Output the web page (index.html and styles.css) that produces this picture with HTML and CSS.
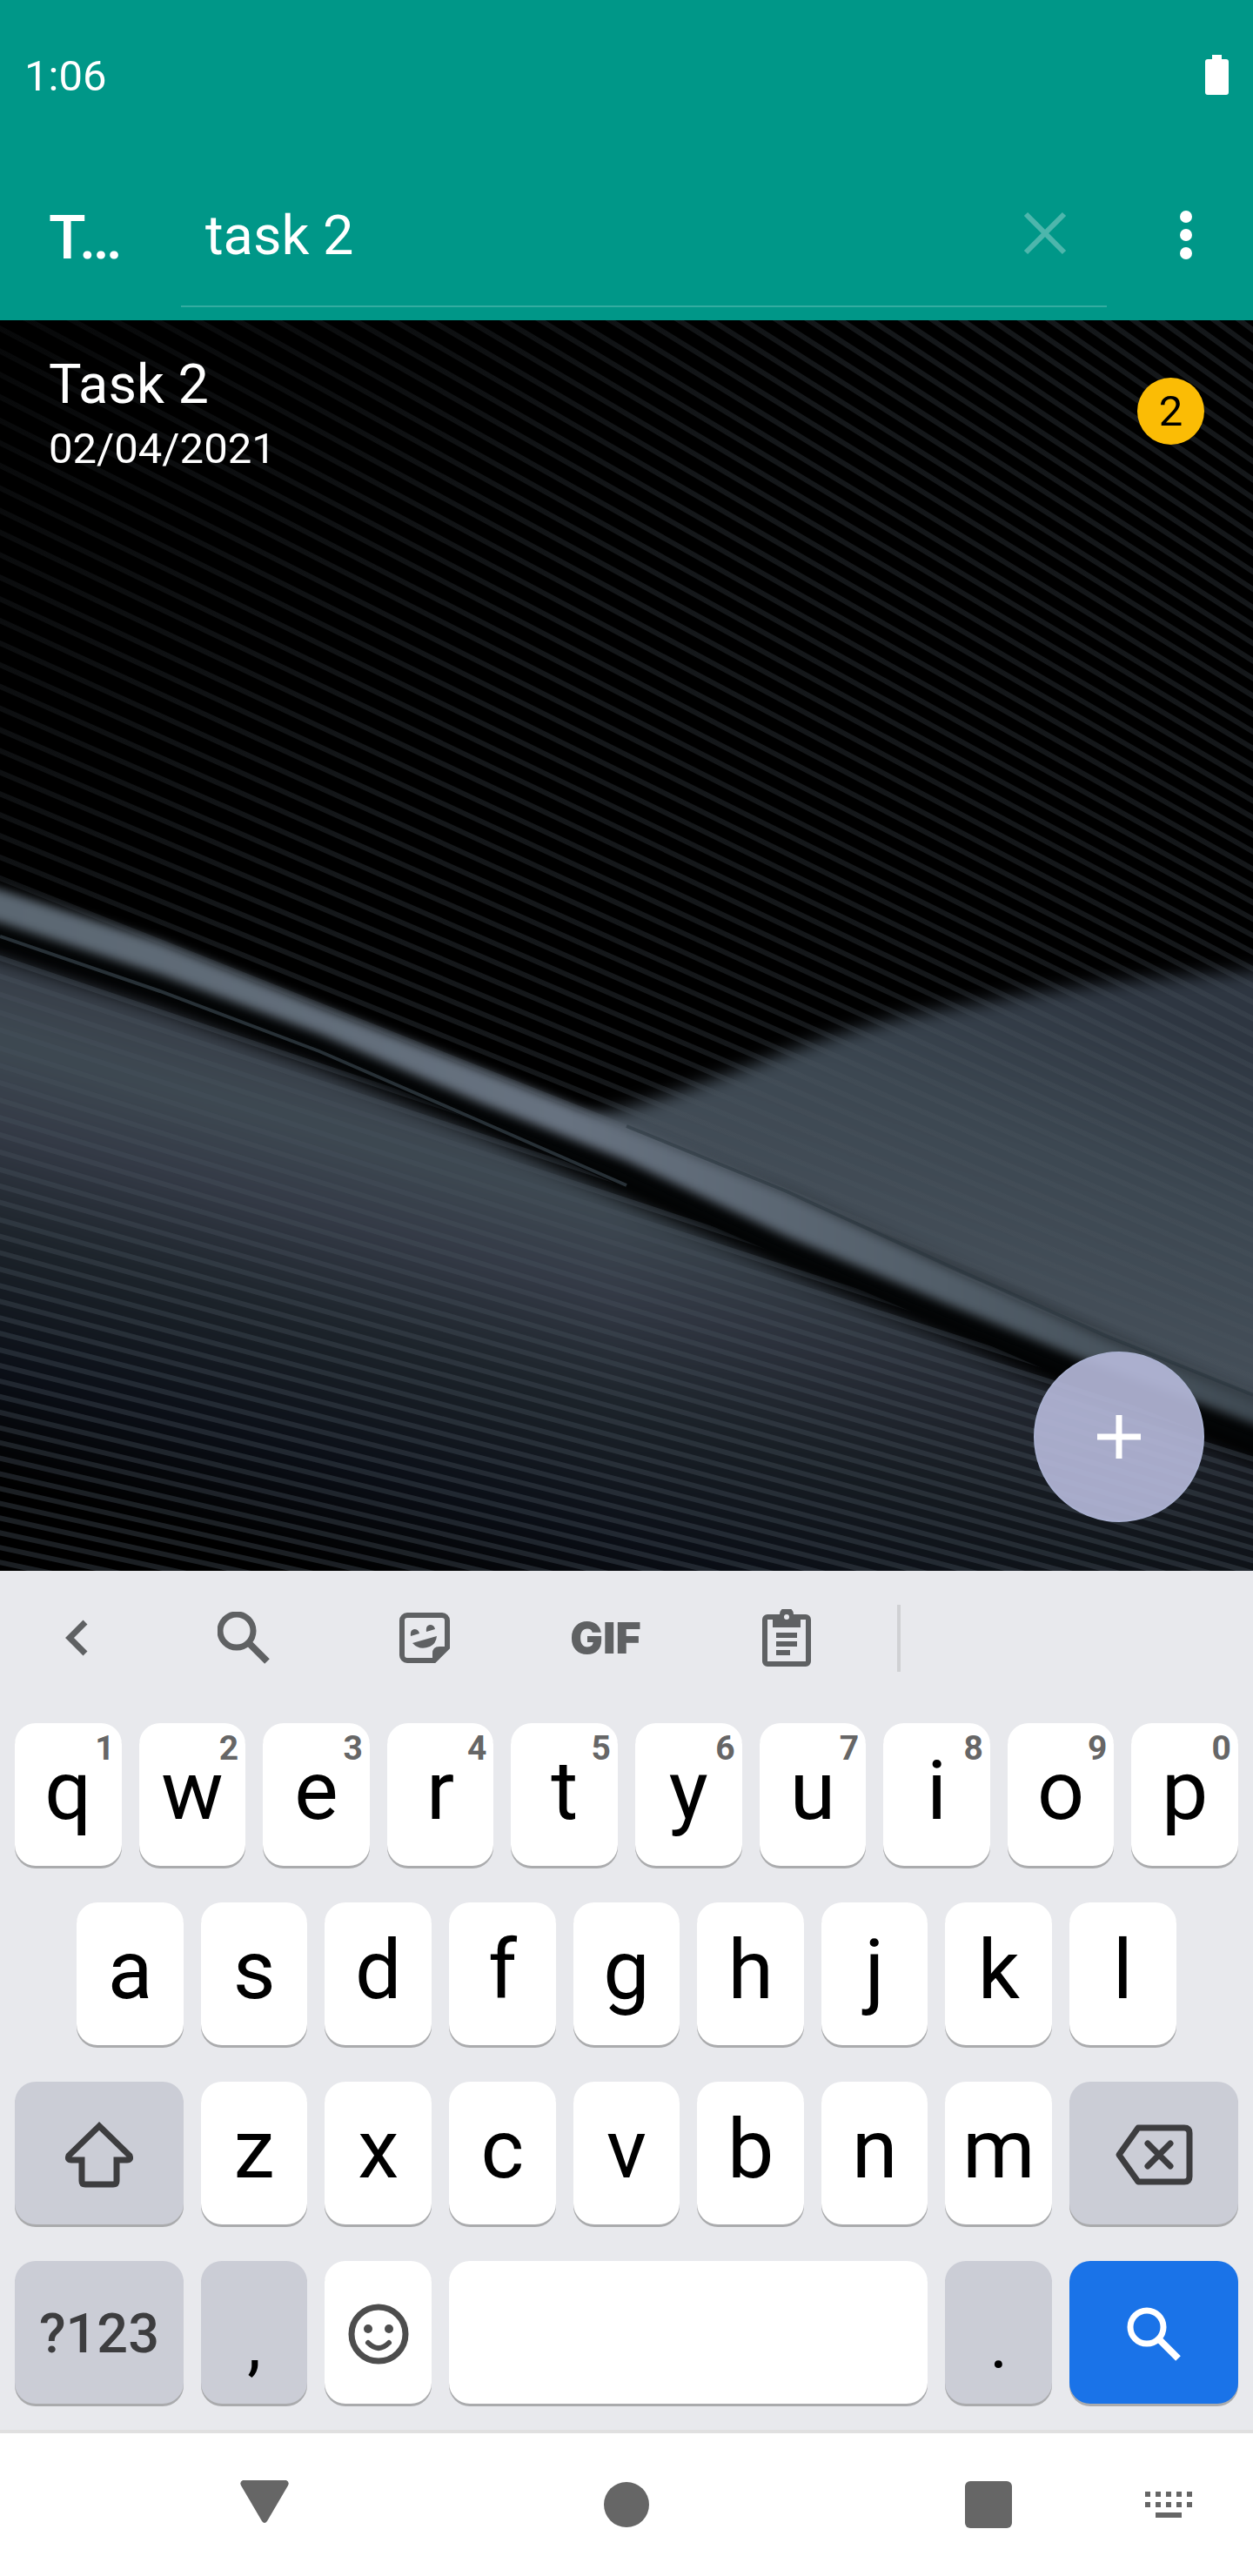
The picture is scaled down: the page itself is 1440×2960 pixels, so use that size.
FILE: index.html
```html
<!DOCTYPE html>
<html lang="en">
<head>
<meta charset="utf-8">
<meta name="viewport" content="width=device-width, initial-scale=1">
<title>Tasks</title>
<link rel="stylesheet" href="styles.css">
</head>
<body>
<div class="screen">
  <header class="top">
    <div class="status">
      <time class="clock">1:06</time>
      <svg class="battery" width="27" height="46" viewBox="0 0 27 46" aria-label="Battery full"><path d="M8 0h11v5h5a3 3 0 0 1 3 3v35a3 3 0 0 1-3 3H3a3 3 0 0 1-3-3V8a3 3 0 0 1 3-3h5z"/></svg>
    </div>
    <div class="appbar">
      <h1 class="title">T…</h1>
      <form class="search">
        <input class="query" type="text" aria-label="Search tasks" value="task 2">
        <button class="clear" type="reset" aria-label="Clear">
          <svg width="50" height="50" viewBox="0 0 50 50"><path d="M3 3l44 44M47 3L3 47" fill="none" stroke="#4db6ac" stroke-width="6"/></svg>
        </button>
      </form>
      <button class="more" type="button" aria-label="More options">
        <svg width="14" height="56" viewBox="0 0 14 56" fill="#fff"><circle cx="7" cy="7" r="7"/><circle cx="7" cy="28" r="7"/><circle cx="7" cy="49" r="7"/></svg>
      </button>
    </div>
  </header>

  <main class="board">
    <svg class="wallpaper" viewBox="0 368 1440 1437" preserveAspectRatio="xMidYMid slice" aria-hidden="true" color-interpolation-filters="sRGB">
      <defs>
        <linearGradient id="lower" gradientUnits="userSpaceOnUse" x1="300" y1="1150" x2="140" y2="1740">
          <stop offset="0" stop-color="#25303a"/>
          <stop offset=".08" stop-color="#383f49"/>
          <stop offset=".2" stop-color="#3e4952"/>
          <stop offset=".36" stop-color="#343a46"/>
          <stop offset=".56" stop-color="#1c232a"/>
          <stop offset=".8" stop-color="#0b0f17"/>
          <stop offset="1" stop-color="#000"/>
        </linearGradient>
        <linearGradient id="fade" gradientUnits="userSpaceOnUse" x1="700" y1="0" x2="1440" y2="0">
          <stop offset="0" stop-color="#04060a" stop-opacity="0"/>
          <stop offset="1" stop-color="#04060a" stop-opacity=".6"/>
        </linearGradient>
        <linearGradient id="right" gradientUnits="userSpaceOnUse" x1="1200" y1="1120" x2="1080" y2="1460">
          <stop offset="0" stop-color="#2e3641"/>
          <stop offset=".5" stop-color="#3c4751"/>
          <stop offset="1" stop-color="#444e58"/>
        </linearGradient>
        <linearGradient id="rim" gradientUnits="userSpaceOnUse" x1="0" y1="0" x2="1440" y2="0">
          <stop offset="0" stop-color="#5b6772"/>
          <stop offset=".45" stop-color="#677280"/>
          <stop offset=".75" stop-color="#525e69"/>
          <stop offset="1" stop-color="#3f4a53"/>
        </linearGradient>
        <linearGradient id="rib" gradientUnits="userSpaceOnUse" x1="0" y1="400" x2="500" y2="900">
          <stop offset="0" stop-color="#4a545d" stop-opacity=".1"/>
          <stop offset="1" stop-color="#4a545d" stop-opacity=".28"/>
        </linearGradient>
        <clipPath id="above"><path d="M0 368H1440V1610L1271 1540L1087 1458L904 1375L720 1300L551 1232L367 1160L184 1086L0 1026Z"/></clipPath>
        <clipPath id="below"><path d="M0 1090L184 1150L367 1215L551 1290L720 1366L904 1446L1087 1524L1202 1574L1440 1670V1805H0Z"/></clipPath>
        <filter id="soft" x="-10%" y="-10%" width="120%" height="120%"><feGaussianBlur stdDeviation="6"/></filter>
        <filter id="softer" x="-10%" y="-10%" width="120%" height="120%"><feGaussianBlur stdDeviation="10"/></filter>
      </defs>
      <rect y="368" width="1440" height="1437" fill="#000"/>
      <path filter="url(#softer)" fill="url(#right)" d="M660 1286C720 1278 790 1252 858 1227C950 1190 1040 1165 1133 1152C1230 1132 1340 1122 1480 1114V1630L1271 1540L904 1375Z"/>
      <g id="upper-lines" clip-path="url(#above)" stroke="url(#rib)" stroke-width="6"></g>
      <g filter="url(#softer)">
        <path fill="url(#lower)" d="M-40 1088L0 1100L184 1160L367 1228L551 1304L720 1380L904 1460L1087 1536L1202 1588L1480 1695V1840H-40Z"/>
        <path fill="url(#fade)" d="M-40 1088L0 1100L184 1160L367 1228L551 1304L720 1380L904 1460L1087 1536L1202 1588L1480 1695V1840H-40Z"/>
      </g>
      <g id="lower-lines" clip-path="url(#below)" stroke="#46525b" stroke-opacity=".38" stroke-width="6"></g>
      <path filter="url(#soft)" fill="none" stroke="#030506" stroke-width="22" d="M-40 1064L0 1074L184 1134L367 1203L551 1281L720 1350L904 1436L1087 1512L1239 1574L1480 1668"/>
      <path fill="none" stroke="#38434c" stroke-opacity=".7" stroke-width="4" d="M0 1076L184 1139L367 1208L551 1288L720 1362"/>
      <path filter="url(#soft)" fill="url(#rim)" d="M-40 1012L0 1022L184 1082L367 1156L551 1228L720 1295L904 1370L1087 1455L1271 1537L1480 1622V1652L1440 1636L1239 1560L1087 1498L904 1421L720 1334L551 1267L367 1188L184 1120L0 1060L-40 1050Z"/>
      <path fill="none" stroke="#26313a" stroke-opacity=".5" stroke-width="4" d="M720 1294L904 1369L1087 1453L1271 1535L1440 1603"/>
    </svg>

    <section class="content">
      <ul class="tasks">
        <li class="task">
          <div class="summary">
            <h2 class="name">Task 2</h2>
            <p class="date">02/04/2021</p>
          </div>
          <span class="badge">2</span>
        </li>
      </ul>
      <button class="fab" type="button" aria-label="Add task">
        <svg width="50" height="50" viewBox="0 0 50 50"><path d="M25 0v50M0 25h50" stroke="#fff" stroke-width="7"/></svg>
      </button>
    </section>
  </main>

  <section class="keyboard" aria-label="Keyboard">
    <div class="tools">
      <button class="tool tool-back" type="button" aria-label="Back"><svg width="26" height="42" viewBox="0 0 26 42"><path d="M23 3L5 21l18 18" fill="none" stroke="#5f6163" stroke-width="7"/></svg></button>
      <button class="tool" type="button" aria-label="Search"><svg width="60" height="60" viewBox="0 0 60 60" fill="none" stroke="#5f6163"><circle cx="22" cy="22" r="19" stroke-width="7"/><path d="M36 36l21 21" stroke-width="8"/></svg></button>
      <button class="tool" type="button" aria-label="Stickers">
        <svg width="58" height="58" viewBox="0 0 58 58" fill="#5f6163"><path d="M9 3h40a6 6 0 0 1 6 6v31L40 55H9a6 6 0 0 1-6-6V9a6 6 0 0 1 6-6z" fill="none" stroke="#5f6163" stroke-width="6"/><path d="M38 57V47q0-8 8-8h11v2L41 57zM13 27q-1-7 4-8 5 0 6 5zM31 22q-1-7 4-8 5 0 6 5zM15 35l28-8q-1 9-8 12-12 5-20-4z"/></svg>
      </button>
      <button class="tool gif" type="button">GIF</button>
      <button class="tool" type="button" aria-label="Clipboard">
        <svg width="56" height="66" viewBox="0 0 56 66"><path fill="#5f6163" fill-rule="evenodd" d="M6 6h14a8 8 0 0 1 16 0h14a6 6 0 0 1 6 6v48a6 6 0 0 1-6 6H6a6 6 0 0 1-6-6V12a6 6 0 0 1 6-6zm0 6v48h44V12h-6v9H12v-9zM28 6a3 3 0 1 0 0 6 3 3 0 1 0 0-6zM16 27h24v6H16zM16 37h24v6H16zM16 47h16v6H16z"/></svg>
      </button>
      <span class="divider"></span>
    </div>
    <div class="keys">
      <button class="key">q<span class="hint">1</span></button>
      <button class="key">w<span class="hint">2</span></button>
      <button class="key">e<span class="hint">3</span></button>
      <button class="key">r<span class="hint">4</span></button>
      <button class="key">t<span class="hint">5</span></button>
      <button class="key">y<span class="hint">6</span></button>
      <button class="key">u<span class="hint">7</span></button>
      <button class="key">i<span class="hint">8</span></button>
      <button class="key">o<span class="hint">9</span></button>
      <button class="key">p<span class="hint">0</span></button>

      <button class="key key-indent">a</button>
      <button class="key">s</button>
      <button class="key">d</button>
      <button class="key">f</button>
      <button class="key">g</button>
      <button class="key">h</button>
      <button class="key">j</button>
      <button class="key">k</button>
      <button class="key">l</button>

      <button class="key key-wide key-gray key-icon key-first" aria-label="Shift"><svg width="80" height="76" viewBox="0 0 80 76"><path d="M40 5L5 39q-2 5 3 5h12v24q0 4 4 4h32q4 0 4-4V44h12q5 0 3-5z" fill="none" stroke="#3d3d3f" stroke-width="7"/></svg></button>
      <button class="key">z</button>
      <button class="key">x</button>
      <button class="key">c</button>
      <button class="key">v</button>
      <button class="key">b</button>
      <button class="key">n</button>
      <button class="key">m</button>
      <button class="key key-wide key-gray key-icon" aria-label="Delete"><svg width="90" height="70" viewBox="0 0 90 70" fill="none" stroke="#3d3d3f" stroke-width="7" stroke-linejoin="round"><path d="M27 4h53q6 0 6 6v50q0 6-6 6H27L5 35z"/><path d="M38 22l26 26M64 22L38 48" stroke-linecap="round"/></svg></button>

      <button class="key key-wide key-gray key-mode">?123</button>
      <button class="key key-gray key-mark">,</button>
      <button class="key key-icon" aria-label="Emoji"><svg width="70" height="70" viewBox="0 0 70 70"><circle cx="35" cy="35" r="31" fill="none" stroke="#4d4d4d" stroke-width="7"/><circle cx="23" cy="29" r="5" fill="#4d4d4d"/><circle cx="47" cy="29" r="5" fill="#4d4d4d"/><path d="M23 45q12 12 24 0" fill="none" stroke="#4d4d4d" stroke-width="6" stroke-linecap="round"/></svg></button>
      <button class="key key-space" aria-label="Space"></button>
      <button class="key key-gray key-mark">.</button>
      <button class="key key-wide key-blue key-icon" aria-label="Search"><svg width="62" height="62" viewBox="0 0 62 62" fill="none" stroke="#fff"><circle cx="23" cy="23" r="19" stroke-width="7"/><path d="M38 38l21 21" stroke-width="8"/></svg></button>
    </div>
  </section>

  <nav class="nav" aria-label="System">
    <button type="button" aria-label="Back"><svg class="up" width="56" height="50" viewBox="0 0 56 50"><path d="M3 0h50q4 2 2 6L31 47q-3 4-6 0L1 6Q-1 2 3 0z" fill="#666"/></svg></button>
    <button type="button" aria-label="Home"><svg width="52" height="52" viewBox="0 0 52 52"><circle cx="26" cy="26" r="26" fill="#666"/></svg></button>
    <button type="button" aria-label="Recents"><svg width="54" height="54" viewBox="0 0 54 54"><rect width="54" height="54" rx="6" fill="#666"/></svg></button>
    <button class="switcher" type="button" aria-label="Switch keyboard"><svg width="54" height="30" viewBox="0 0 54 30"><path d="M0 0h6v6H0zM12 0h6v6h-6zM24 0h6v6h-6zM36 0h6v6h-6zM48 0h6v6h-6zM0 12h6v6H0zM12 12h6v6h-6zM24 12h6v6h-6zM36 12h6v6h-6zM48 12h6v6h-6zM12 24h30v6H12z" fill="#666"/></svg></button>
  </nav>
</div>
<script src="wallpaper.js"></script>
</body>
</html>
```
FILE: styles.css
```css
* {
  box-sizing: border-box;
}

body {
  margin: 0;
  font-family: Roboto, "Noto Sans", sans-serif;
  color: #fff;
  background: #000;
}

button,
input {
  margin: 0;
  padding: 0;
  border: 0;
  background: none;
  color: inherit;
  font: inherit;
}

button {
  display: flex;
  align-items: center;
  justify-content: center;
}

h1,
h2,
p,
ul {
  margin: 0;
  padding: 0;
  list-style: none;
}

.screen {
  display: flex;
  flex-direction: column;
  min-height: 100vh;
}

/* status and app bar */
.top {
  background: #009788;
}

.status {
  display: flex;
  align-items: center;
  justify-content: space-between;
  height: 172px;
  padding: 4px 28px 0;
}

.clock {
  font-size: 49px;
  line-height: 56px;
}

.battery {
  margin-bottom: 4px;
  fill: #fff;
}

.appbar {
  display: flex;
  height: 196px;
  padding-left: 56px;
}

.title {
  width: 152px;
  padding-top: 6px;
  font-size: 70px;
  font-weight: 500;
  line-height: 190px;
}

.search {
  display: flex;
  flex: 1;
  height: 181px;
  padding-left: 28px;
  border-bottom: 2px solid #33aca0;
}

.query {
  flex: 1;
  min-width: 0;
  padding-top: 18px;
  font-size: 63px;
  outline: 0;
}

.clear {
  width: 142px;
  padding-top: 12px;
}

.more {
  width: 154px;
  margin-left: 14px;
}

/* task list */
.board {
  display: grid;
  flex: 1;
  grid-template: minmax(0, 1fr) / minmax(0, 1fr);
}

.wallpaper,
.content {
  grid-area: 1 / 1;
}

.wallpaper {
  width: 100%;
  height: 100%;
  contain: size;
}

.content {
  z-index: 1;
  display: flex;
  flex-direction: column;
  justify-content: space-between;
}

.task {
  display: flex;
  align-items: center;
  justify-content: space-between;
  padding: 24px 56px;
}

.summary {
  padding-top: 12px;
}

.name {
  font-size: 63px;
  font-weight: 400;
  line-height: 76px;
}

.date {
  font-size: 49px;
  line-height: 72px;
}

.badge {
  width: 77px;
  height: 77px;
  border-radius: 50%;
  background: #fbbc05;
  color: #000;
  font-size: 49px;
  line-height: 77px;
  text-align: center;
}

.fab {
  align-self: flex-end;
  width: 196px;
  height: 196px;
  margin: 0 56px 56px;
  border: 2px solid #a9b0d0;
  border-radius: 50%;
  background: rgba(181, 185, 218, 0.91);
}

/* keyboard */
.keyboard {
  padding-bottom: 28px;
  background: #e8e9ed;
}

.tools {
  display: flex;
  align-items: center;
  height: 154px;
  margin-bottom: 21px;
}

.tool {
  width: 208px;
  height: 100%;
}

.tool-back {
  width: 176px;
}

.gif {
  color: #5f6163;
  font-family: Inter, Roboto, sans-serif;
  font-size: 50px;
  font-weight: 900;
}

.divider {
  width: 4px;
  height: 77px;
  margin-left: 23px;
  background: #d0d1d4;
}

.keys {
  display: grid;
  grid-template-columns: repeat(20, minmax(0, 1fr));
  grid-auto-rows: 164px;
  gap: 42px 20px;
  padding: 0 17px 2px;
}

.key {
  position: relative;
  grid-column: span 2;
  padding-bottom: 8px;
  border-radius: 24px;
  background: #fff;
  box-shadow: 0 3px 0 #aaabad;
  color: #000;
  font-size: 95px;
  line-height: 96px;
}

.key-indent {
  grid-column: 2 / span 2;
}

.key-wide {
  grid-column: span 3;
}

.key-first {
  grid-column: 1 / span 3;
}

.key-space {
  grid-column: span 8;
}

.key-gray {
  background: #cbcdd6;
}

.key-blue {
  background: #1a73e8;
}

.key-icon {
  padding: 4px 0 0;
}

.key-mode {
  padding: 4px 0 0;
  color: #3d3d3f;
  font-size: 63px;
  font-weight: 500;
}

.key-mark {
  padding: 28px 0 0;
  font-size: 80px;
}

.hint {
  position: absolute;
  top: 9px;
  right: 8px;
  color: #666;
  font-size: 39px;
  font-weight: 700;
  line-height: 40px;
}

/* system navigation */
.nav {
  display: grid;
  grid-template-columns: minmax(0, 96fr) repeat(3, minmax(0, 416fr)) minmax(0, 96fr);
  height: 168px;
  border-top: 4px solid #e0e0e0;
  background: #fff;
}

.nav button:first-child {
  grid-column: 2;
}

.up {
  margin-bottom: 6px;
}

.nav .switcher {
  justify-self: end;
  width: 114px;
  margin-right: 40px;
}
```
FILE: wallpaper.js
```js
// Fine diagonal ribs of the wallpaper: each one starts at the left edge
// at height y and gets flatter towards the bottom.
function ribs(id, from, to, step, slope) {
  const d = [];
  for (let y = from; y < to; y += step(y)) {
    d.push(`M-20 ${Math.round(y - 20 * slope(y))}L1460 ${Math.round(y + 1460 * slope(y))}`);
  }
  const path = document.createElementNS("http://www.w3.org/2000/svg", "path");
  path.setAttribute("d", d.join(""));
  document.getElementById(id).appendChild(path);
}

ribs("upper-lines", -900, 1060, y => 24 + (1000 - y) * 0.004, y => 0.4 + (1000 - y) * 0.0002);
ribs("lower-lines", 1080, 1820, y => 21 - (y - 1080) * 0.006, y => 0.34 - (y - 1080) * 0.00018);
```
